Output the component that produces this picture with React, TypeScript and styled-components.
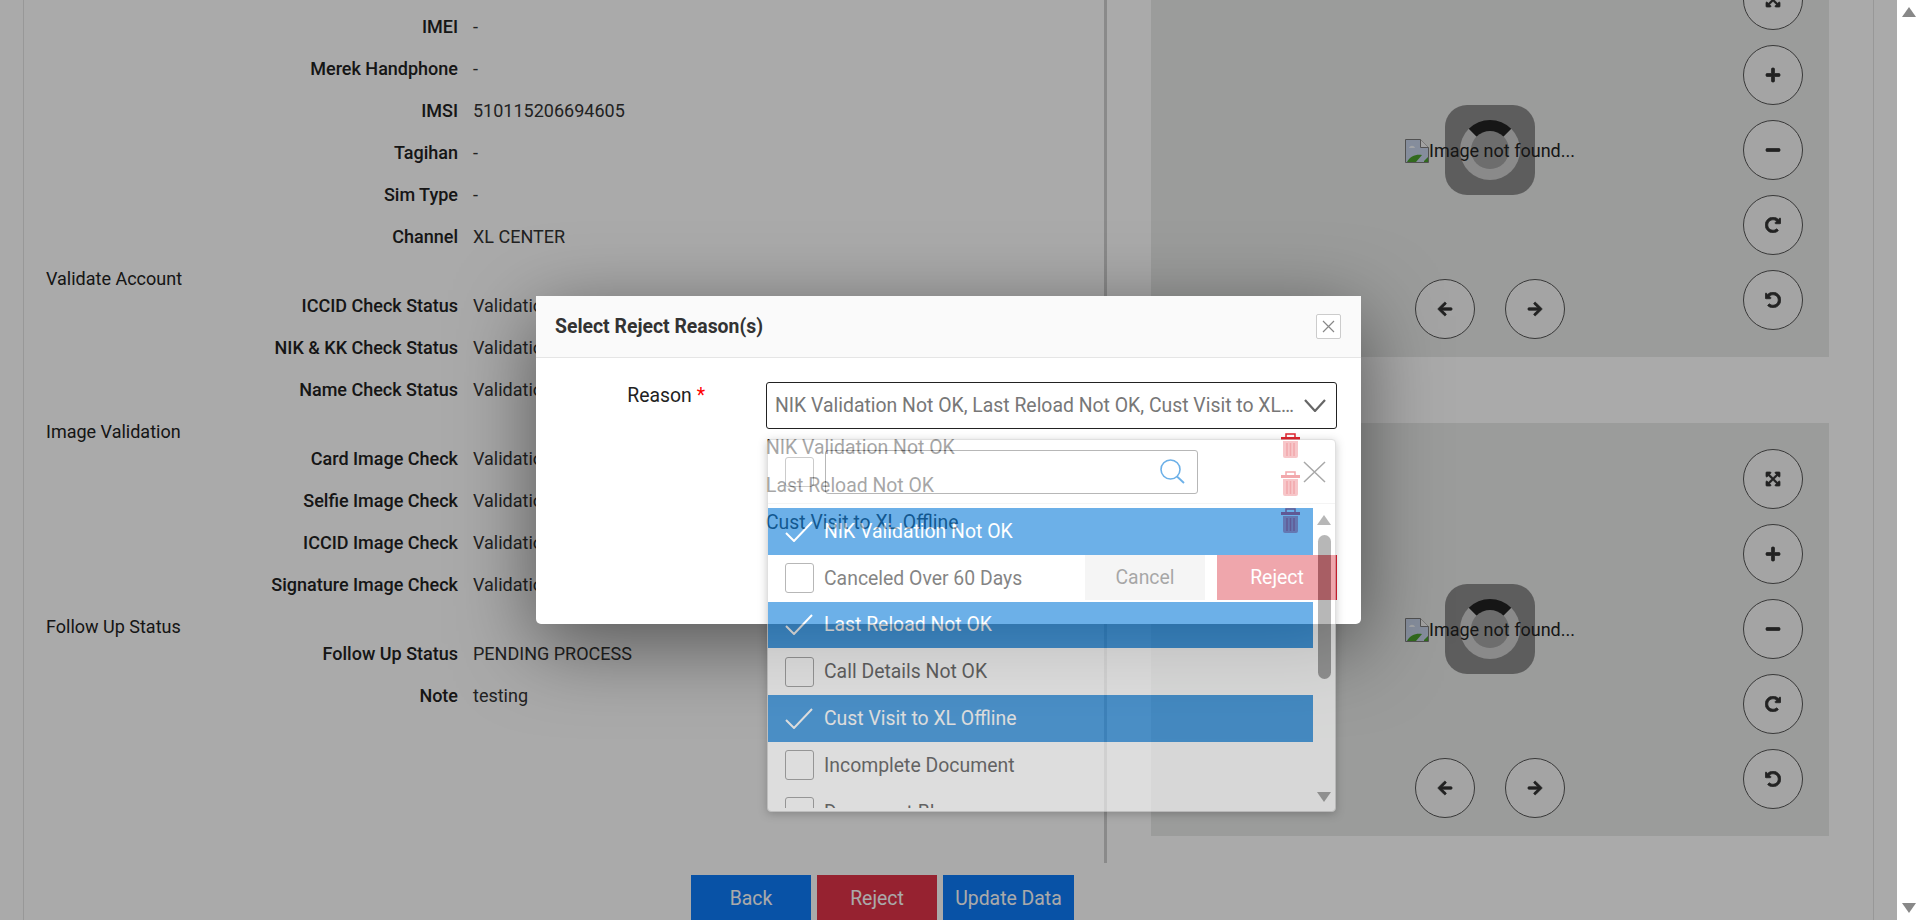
import React from 'react';
import styled, { createGlobalStyle } from 'styled-components';
import {
  FaArrowLeft,
  FaArrowRight,
  FaExpandArrowsAlt,
  FaMinus,
  FaPlus,
  FaRedoAlt,
  FaUndoAlt,
} from 'react-icons/fa';

type InfoItem =
  | { kind: 'section'; title: string }
  | { kind: 'row'; label: string; value: string };

const STATUS = 'Validation OK';

const info: InfoItem[] = [
  { kind: 'row', label: 'IMEI', value: '-' },
  { kind: 'row', label: 'Merek Handphone', value: '-' },
  { kind: 'row', label: 'IMSI', value: '510115206694605' },
  { kind: 'row', label: 'Tagihan', value: '-' },
  { kind: 'row', label: 'Sim Type', value: '-' },
  { kind: 'row', label: 'Channel', value: 'XL CENTER' },
  { kind: 'section', title: 'Validate Account' },
  { kind: 'row', label: 'ICCID Check Status', value: STATUS },
  { kind: 'row', label: 'NIK & KK Check Status', value: STATUS },
  { kind: 'row', label: 'Name Check Status', value: STATUS },
  { kind: 'section', title: 'Image Validation' },
  { kind: 'row', label: 'Card Image Check', value: STATUS },
  { kind: 'row', label: 'Selfie Image Check', value: STATUS },
  { kind: 'row', label: 'ICCID Image Check', value: STATUS },
  { kind: 'row', label: 'Signature Image Check', value: STATUS },
  { kind: 'section', title: 'Follow Up Status' },
  { kind: 'row', label: 'Follow Up Status', value: 'PENDING PROCESS' },
  { kind: 'row', label: 'Note', value: 'testing' },
];

const reasons = [
  { name: 'NIK Validation Not OK', checked: true },
  { name: 'Canceled Over 60 Days', checked: false },
  { name: 'Last Reload Not OK', checked: true },
  { name: 'Call Details Not OK', checked: false },
  { name: 'Cust Visit to XL Offline', checked: true },
  { name: 'Incomplete Document', checked: false },
  { name: 'Document Blur', checked: false },
];

const chosen = reasons.filter((r) => r.checked).map((r) => r.name);

const TrashIcon = () => (
  <svg width="19" height="25" viewBox="0 0 19 25">
    <path d="M5 4V1h9v3" fill="none" stroke="#e0252f" strokeWidth="1.500" />
    <rect x="0" y="4" width="19" height="3" fill="#e0252f" />
    <path d="M2 8h15v15a2 2 0 0 1-2 2H4a2 2 0 0 1-2-2z" fill="#e0252f" opacity="0.65" />
    <path d="M6 10v13M9.500 10v13M13 10v13" stroke="#e0252f" strokeWidth="1.500" />
  </svg>
);

const BrokenImage = () => (
  <svg width="24" height="24" viewBox="0 0 24 24">
    <path d="M.5.500h15l8 8v15H.5z" fill="#c8d4ea" stroke="#7a7a7a" />
    <path d="M15.500.500v8h8" fill="#f4f4f4" stroke="#7a7a7a" />
    <path d="M4 9c1-3 5-3 6 0z" fill="#f4f6fa" />
    <path d="M2 23c3-6 9-8 15-7l-6 7z" fill="#4aa02c" />
    <path d="M19 22l4-4v5h-4z" fill="#4aa02c" />
  </svg>
);

const ImageViewer = () => (
  <Viewer>
    <Spinner>
      <SpinnerRing />
    </Spinner>
    <NotFound>
      <BrokenImage />
      Image not found...
    </NotFound>
    <ZoomControls>
      <RoundButton><FaExpandArrowsAlt /></RoundButton>
      <RoundButton><FaPlus /></RoundButton>
      <RoundButton><FaMinus /></RoundButton>
      <RoundButton><FaRedoAlt /></RoundButton>
      <RoundButton><FaUndoAlt /></RoundButton>
    </ZoomControls>
    <NavControls>
      <RoundButton><FaArrowLeft /></RoundButton>
      <RoundButton><FaArrowRight /></RoundButton>
    </NavControls>
  </Viewer>
);

const App = () => {
  return (
    <>
      <GlobalStyle />
      <Screen>
        <Card>
          <Columns>
            <InfoColumn>
              {info.map((item) =>
                item.kind === 'section' ? (
                  <SectionTitle key={item.title}>{item.title}</SectionTitle>
                ) : (
                  <InfoRow key={item.label}>
                    <InfoLabel>{item.label}</InfoLabel>
                    <InfoValue>{item.value}</InfoValue>
                  </InfoRow>
                ),
              )}
            </InfoColumn>
            <ImageColumn>
              <ImageViewer />
              <ImageViewer />
            </ImageColumn>
          </Columns>
          <Actions>
            <ActionButton>Back</ActionButton>
            <ActionButton danger>Reject</ActionButton>
            <ActionButton wide>Update Data</ActionButton>
          </Actions>
        </Card>
        <Backdrop>
          <Modal>
            <ModalHeader>
              <ModalTitle>Select Reject Reason(s)</ModalTitle>
              <CloseButton>
                <svg width="13" height="13" viewBox="0 0 13 13">
                  <path d="M1 1l11 11M12 1L1 12" stroke="#888" strokeWidth="1.200" />
                </svg>
              </CloseButton>
            </ModalHeader>
            <ModalBody>
              <FormRow>
                <FormLabel>
                  Reason <Required>*</Required>
                </FormLabel>
                <FormField>
                  <SelectBox>
                    <SelectText>{chosen.join(', ')}</SelectText>
                    <svg width="22" height="13" viewBox="0 0 22 13">
                      <path d="M1 1l10 11L21 1" fill="none" stroke="#666" strokeWidth="2.200" />
                    </svg>
                  </SelectBox>
                  {chosen.map((name) => (
                    <ChosenItem key={name}>
                      {name}
                      <TrashIcon />
                    </ChosenItem>
                  ))}
                  <Dropdown>
                    <DropdownHead>
                      <HeadCheck />
                      <SearchBox>
                        <svg width="25" height="25" viewBox="0 0 25 25">
                          <circle cx="10.500" cy="10.500" r="9.500" fill="none" stroke="#0c7dd9" strokeWidth="1.600" />
                          <path d="M17 17.500l7 6.500" stroke="#0c7dd9" strokeWidth="1.800" />
                        </svg>
                      </SearchBox>
                      <HeadClose>
                        <svg width="23" height="22" viewBox="0 0 23 22">
                          <path d="M1 1l21 20M22 1L1 21" stroke="#707070" strokeWidth="1.500" />
                        </svg>
                      </HeadClose>
                    </DropdownHead>
                    <DropdownBody>
                      <OptionList>
                        {reasons.map((r) => (
                          <Option key={r.name} selected={r.checked}>
                            {r.checked ? (
                              <CheckMark>
                                <svg width="28" height="21" viewBox="0 0 28 21">
                                  <path d="M1 12l8 8L27 1" fill="none" stroke="#fff" strokeWidth="2" />
                                </svg>
                              </CheckMark>
                            ) : (
                              <CheckBox />
                            )}
                            {r.name}
                          </Option>
                        ))}
                      </OptionList>
                      <ListScroll>
                        <ArrowUp />
                        <ListThumb />
                        <ArrowDown />
                      </ListScroll>
                    </DropdownBody>
                  </Dropdown>
                </FormField>
              </FormRow>
              <ModalFooter>
                <CancelButton>Cancel</CancelButton>
                <RejectButton>Reject</RejectButton>
              </ModalFooter>
            </ModalBody>
          </Modal>
        </Backdrop>
        <PageScroll>
          <ArrowUp />
          <ArrowDown />
        </PageScroll>
      </Screen>
    </>
  );
};

export default App;

const GlobalStyle = createGlobalStyle`
  * {
    box-sizing: border-box;
  }
  html, body {
    margin: 0;
    height: 920px;
    overflow: hidden;
    background: #fff;
    font-family: Roboto, "Liberation Sans", sans-serif;
    font-size: 18px;
    color: #222;
  }
`;

const Screen = styled.div`
  position: relative;
  display: flex;
  width: 1920px;
  height: 920px;
  overflow: hidden;
`;

const Card = styled.div`
  width: 1851px;
  height: 920px;
  margin-left: 23px;
  border-left: 1px solid #e4e4e4;
  border-right: 1px solid #e4e4e4;
  overflow: hidden;
`;

const Columns = styled.div`
  display: flex;
  height: 863px;
`;

const InfoColumn = styled.div`
  width: 1083px;
  padding: 15px 0 0 22px;
  border-right: 3px solid #d0d0d0;
`;

const SectionTitle = styled.div`
  height: 27px;
  line-height: 24px;
  font-weight: 400;
  color: #222;
`;

const InfoRow = styled.div`
  display: flex;
  height: 42px;
  line-height: 24px;
  gap: 15px;
`;

const InfoLabel = styled.div`
  width: 412px;
  text-align: right;
  font-weight: 500;
`;

const InfoValue = styled.div`
  color: #333;
`;

const ImageColumn = styled.div`
  display: flex;
  flex-direction: column;
  gap: 66px;
  margin-top: -56px;
  padding-left: 44px;
`;

const Viewer = styled.div`
  position: relative;
  display: flex;
  align-items: center;
  justify-content: center;
  width: 678px;
  height: 413px;
  background: #e9eae9;
`;

const Spinner = styled.div`
  position: absolute;
  top: 161px;
  left: 294px;
  display: flex;
  align-items: center;
  justify-content: center;
  width: 90px;
  height: 90px;
  border-radius: 22px;
  background: rgba(0, 0, 0, 0.4);
`;

const SpinnerRing = styled.div`
  width: 60px;
  height: 60px;
  border-radius: 50%;
  border: 11px solid rgba(255, 255, 255, 0.58);
  border-top-color: #222;
  background: rgba(255, 255, 255, 0.21);
  background-clip: padding-box;
`;

const NotFound = styled.div`
  position: relative;
  display: flex;
  align-items: center;
  color: #222;
`;

const ZoomControls = styled.div`
  position: absolute;
  top: 26px;
  right: 26px;
  display: flex;
  flex-direction: column;
  gap: 15px;
`;

const NavControls = styled.div`
  position: absolute;
  bottom: 18px;
  left: 264px;
  display: flex;
  gap: 30px;
`;

const RoundButton = styled.div`
  display: flex;
  align-items: center;
  justify-content: center;
  width: 60px;
  height: 60px;
  border-radius: 50%;
  border: 1px solid #555;
  background: rgba(255, 255, 255, 0.6);
  color: #333;
  font-size: 16px;

  svg {
    stroke: currentColor;
    stroke-width: 24;
  }
`;

const Actions = styled.div`
  display: flex;
  gap: 6px;
  padding: 12px 0 0 667px;
`;

const ActionButton = styled.div<{ danger?: boolean; wide?: boolean }>`
  display: flex;
  align-items: center;
  justify-content: center;
  width: ${({ wide }) => (wide ? '131px' : '120px')};
  height: 47px;
  background: ${({ danger }) => (danger ? '#e23348' : '#0d7bf9')};
  color: #fff;
  font-size: 19.4px;
`;

const Backdrop = styled.div`
  position: absolute;
  top: 0;
  left: 0;
  width: 1897px;
  height: 920px;
  background: rgba(0, 0, 0, 0.333);
`;

const Modal = styled.div`
  position: absolute;
  top: 296px;
  left: 536px;
  width: 825px;
  height: 328px;
  background: #fff;
  border-radius: 0 0 5px 5px;
  box-shadow: 0 20px 80px rgba(0, 0, 0, 0.5);
  font-size: 19.4px;
`;

const ModalHeader = styled.div`
  display: flex;
  align-items: center;
  justify-content: space-between;
  height: 62px;
  padding: 0 20px 0 19px;
  background: #fafafa;
  border-bottom: 1px solid #e5e5e5;
`;

const ModalTitle = styled.div`
  font-weight: 700;
  color: #333;
`;

const CloseButton = styled.div`
  display: flex;
  align-items: center;
  justify-content: center;
  width: 25px;
  height: 25px;
  background: #fff;
  border: 1px solid #ccc;
  border-radius: 2px;
`;

const ModalBody = styled.div`
  padding: 24px 24px 24px 0;
`;

const FormRow = styled.div`
  display: flex;
`;

const FormLabel = styled.div`
  width: 169px;
  text-align: right;
  margin: 3px 61px 0 0;
  line-height: 22px;
  color: #222;
`;

const Required = styled.span`
  color: #f00;
`;

const FormField = styled.div`
  position: relative;
  width: 571px;
`;

const SelectBox = styled.div`
  display: flex;
  align-items: center;
  gap: 9px;
  height: 47px;
  padding: 0 10px 0 8px;
  border: 1px solid #222;
  border-radius: 3px;
`;

const SelectText = styled.div`
  flex: 1;
  min-width: 0;
  overflow: hidden;
  white-space: nowrap;
  text-overflow: ellipsis;
  color: #777;
`;

const ChosenItem = styled.div`
  display: flex;
  align-items: center;
  justify-content: space-between;
  height: 37.500px;
  padding-right: 37px;
  color: #222;

  svg {
    margin-bottom: 4px;
  }
`;

const ModalFooter = styled.div`
  display: flex;
  justify-content: flex-end;
  gap: 12px;
  margin-top: 13px;
`;

const FooterButton = styled.div`
  display: flex;
  align-items: center;
  justify-content: center;
  width: 120px;
  height: 45px;
`;

const CancelButton = styled(FooterButton)`
  background: #e6e6e6;
  color: #222;
`;

const RejectButton = styled(FooterButton)`
  background: #d92030;
  color: #fff;
`;

const Dropdown = styled.div`
  position: absolute;
  top: 57px;
  left: 1px;
  width: 569px;
  height: 373px;
  background: #fff;
  border: 1px solid #ccc;
  border-radius: 4px;
  box-shadow: 0 2px 8px rgba(0, 0, 0, 0.35);
  opacity: 0.6;
  overflow: hidden;
`;

const DropdownHead = styled.div`
  display: flex;
  align-items: center;
  height: 64px;
  padding: 0 9px 0 17px;
  border-bottom: 1px solid #eee;
`;

const HeadCheck = styled.div`
  width: 29px;
  height: 30px;
  margin-right: 11px;
  border: 1px solid #aaa;
  border-radius: 3px;
`;

const SearchBox = styled.div`
  display: flex;
  align-items: center;
  justify-content: flex-end;
  width: 373px;
  height: 44px;
  padding-right: 12px;
  border: 1px solid #888;
  border-radius: 3px;
`;

const HeadClose = styled.div`
  display: flex;
  margin-left: auto;
`;

const DropdownBody = styled.div`
  display: flex;
  height: 300px;
  margin-top: 4px;
  overflow: hidden;
`;

const OptionList = styled.div`
  width: 545px;
`;

const Option = styled.div<{ selected?: boolean }>`
  display: flex;
  align-items: center;
  gap: 10px;
  height: 46.800px;
  padding-left: 17px;
  background: ${({ selected }) => (selected ? '#0c7dd9' : 'transparent')};
  color: ${({ selected }) => (selected ? '#fff' : '#333')};
`;

const CheckBox = styled.div`
  width: 29px;
  height: 30px;
  border: 1px solid #888;
  border-radius: 3px;
`;

const CheckMark = styled.div`
  display: flex;
  width: 29px;
  height: 30px;
  align-items: center;
`;

const ListScroll = styled.div`
  display: flex;
  flex: 1;
  flex-direction: column;
  align-items: center;
  padding: 7px 0 6px;
`;

const ArrowUp = styled.div`
  width: 0;
  height: 0;
  border-left: 7.500px solid transparent;
  border-right: 7.500px solid transparent;
  border-bottom: 10px solid #888;
`;

const ArrowDown = styled.div`
  width: 0;
  height: 0;
  margin-top: auto;
  border-left: 7.500px solid transparent;
  border-right: 7.500px solid transparent;
  border-top: 10px solid #888;
`;

const ListThumb = styled.div`
  width: 13px;
  height: 144px;
  margin-top: 10px;
  border-radius: 7px;
  background: #888;
`;

const PageScroll = styled.div`
  position: absolute;
  top: 7px;
  bottom: 7px;
  right: 4px;
  display: flex;
  flex-direction: column;
  align-items: center;
  width: 15px;
`;
